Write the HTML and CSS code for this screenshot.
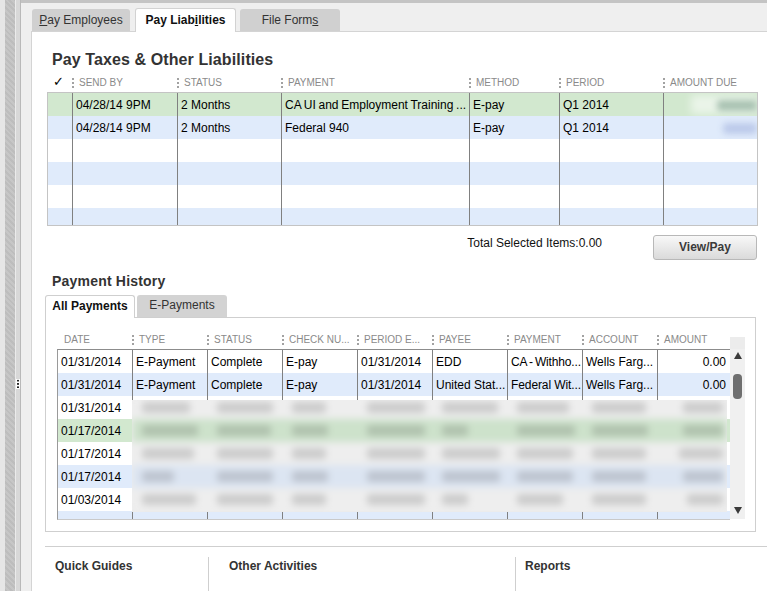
FILE: index.html
```html
<!DOCTYPE html>
<html lang="en">
<head>
<meta charset="utf-8">
<title>Payroll Center</title>
<link rel="stylesheet" href="styles.css">
</head>
<body>
<div class="app">
  <div class="sidebar">
    <div class="sb-a"></div>
    <div class="sb-b"></div>
    <div class="sb-c"></div>
    <div class="sb-d"><span class="grip"></span></div>
  </div>
  <div class="main">
    <div class="topbar"></div>
    <div class="tabs">
      <div class="tab tab1"><u>P</u>ay Employees</div>
      <div class="tab tab2 active">Pay Liab<u>i</u>lities</div>
      <div class="tab tab3">File Form<u>s</u></div>
    </div>
    <div class="content">
      <h1 class="title">Pay Taxes &amp; Other Liabilities</h1>
      <div class="thead">
        <div class="th th-check"><span class="check">✓</span></div>
        <div class="th"><span class="sep"></span>Send By</div>
        <div class="th"><span class="sep"></span>Status</div>
        <div class="th"><span class="sep"></span>Payment</div>
        <div class="th"><span class="sep"></span>Method</div>
        <div class="th"><span class="sep"></span>Period</div>
        <div class="th"><span class="sep"></span>Amount Due</div>
      </div>
      <div class="tbody">
        <div class="trow green">
          <div></div><div>04/28/14 9PM</div><div>2 Months</div><div class="snug">CA UI and Employment Training ...</div><div>E-pay</div><div>Q1 2014</div><div class="amt"><span class="halo"></span><span class="smudge smudge-g"></span></div>
        </div>
        <div class="trow blue">
          <div></div><div>04/28/14 9PM</div><div>2 Months</div><div>Federal 940</div><div>E-pay</div><div>Q1 2014</div><div class="amt"><span class="smudge smudge-b"></span></div>
        </div>
        <div class="trow"><div></div><div></div><div></div><div></div><div></div><div></div><div></div></div>
        <div class="trow blue"><div></div><div></div><div></div><div></div><div></div><div></div><div></div></div>
        <div class="trow"><div></div><div></div><div></div><div></div><div></div><div></div><div></div></div>
        <div class="trow blue"><div></div><div></div><div></div><div></div><div></div><div></div><div></div></div>
      </div>
      <div class="totals">
        <span class="total-text">Total Selected Items:0.00</span>
        <button class="btn" type="button">View/Pay</button>
      </div>

      <section class="history">
        <h2 class="subtitle">Payment History</h2>
        <div class="htabs">
          <div class="htab active">All Payments</div>
          <div class="htab">E-Payments</div>
        </div>
        <div class="hpanel">
          <div class="hgrid">
            <div class="htable">
              <div class="hhead">
                <div class="hh hh-first">Date</div>
                <div class="hh"><span class="sep"></span>Type</div>
                <div class="hh"><span class="sep"></span>Status</div>
                <div class="hh"><span class="sep"></span>Check Nu...</div>
                <div class="hh"><span class="sep"></span>Period E...</div>
                <div class="hh"><span class="sep"></span>Payee</div>
                <div class="hh"><span class="sep"></span>Payment</div>
                <div class="hh"><span class="sep"></span>Account</div>
                <div class="hh"><span class="sep"></span>Amount</div>
              </div>
              <div class="hbody">
                <div class="hrow">
                  <div>01/31/2014</div><div>E-Payment</div><div>Complete</div><div>E-pay</div><div>01/31/2014</div><div>EDD</div><div class="tight">CA - Withho...</div><div>Wells Farg...</div><div class="num">0.00</div>
                </div>
                <div class="hrow blue">
                  <div>01/31/2014</div><div>E-Payment</div><div>Complete</div><div>E-pay</div><div>01/31/2014</div><div>United Stat...</div><div class="slim">Federal Wit...</div><div>Wells Farg...</div><div class="num">0.00</div>
                </div>
                <div class="hrow"><div>01/31/2014</div><div></div><div></div><div></div><div></div><div></div><div></div><div></div><div></div></div>
                <div class="hrow green"><div>01/17/2014</div><div></div><div></div><div></div><div></div><div></div><div></div><div></div><div></div></div>
                <div class="hrow"><div>01/17/2014</div><div></div><div></div><div></div><div></div><div></div><div></div><div></div><div></div></div>
                <div class="hrow blue"><div>01/17/2014</div><div></div><div></div><div></div><div></div><div></div><div></div><div></div><div></div></div>
                <div class="hrow"><div>01/03/2014</div><div></div><div></div><div></div><div></div><div></div><div></div><div></div><div></div></div>
                <div class="hrow blue"><div></div><div></div><div></div><div></div><div></div><div></div><div></div><div></div><div></div></div>

                <div class="blurbox">
                  <div class="blur">
                    <div class="brow b-gray"><i style="width:48px"></i><i style="width:56px"></i><i style="width:34px"></i><i style="width:58px"></i><i style="width:56px"></i><i style="width:52px"></i><i style="width:54px"></i><i class="r" style="width:40px"></i></div>
                    <div class="brow b-green"><i style="width:56px"></i><i style="width:54px"></i><i style="width:36px"></i><i style="width:58px"></i><i style="width:26px"></i><i style="width:58px"></i><i style="width:56px"></i><i class="r" style="width:40px"></i></div>
                    <div class="brow b-gray"><i style="width:52px"></i><i style="width:56px"></i><i style="width:34px"></i><i style="width:58px"></i><i style="width:58px"></i><i style="width:56px"></i><i style="width:54px"></i><i class="r" style="width:44px"></i></div>
                    <div class="brow b-blue"><i style="width:32px"></i><i style="width:56px"></i><i style="width:36px"></i><i style="width:58px"></i><i style="width:58px"></i><i style="width:56px"></i><i style="width:54px"></i><i class="r" style="width:40px"></i></div>
                    <div class="brow b-gray"><i style="width:54px"></i><i style="width:56px"></i><i style="width:34px"></i><i style="width:58px"></i><i style="width:26px"></i><i style="width:46px"></i><i style="width:54px"></i><i class="r" style="width:36px"></i></div>
                  </div>
                </div>
              </div>
            </div>
            <div class="hscroll">
              <div class="scap"></div>
              <div class="strack">
                <span class="arrow-up"></span>
                <span class="thumb"></span>
                <span class="arrow-down"></span>
              </div>
            </div>
          </div>
        </div>
      </section>

      <footer class="footer">
        <div class="fcol f1">Quick Guides</div>
        <div class="fcol f2">Other Activities</div>
        <div class="fcol f3">Reports</div>
      </footer>
    </div>
  </div>
</div>
</body>
</html>
```

FILE: styles.css
```css
* { box-sizing: border-box; margin: 0; padding: 0; }
html, body { width: 767px; height: 591px; overflow: hidden; }
body {
  font-family: "Liberation Sans", Arial, sans-serif;
  font-size: 12px;
  color: #000;
  background: #fff;
}
.app { display: flex; height: 591px; }

/* left dock strip */
.sidebar {
  flex: none;
  width: 21px;
  display: grid;
  grid-template-columns: 5px 10px 1px 4px;
  border-right: 1px solid #b9b9b9;
}
.sb-a { background: #e6e6e6; }
.sb-b { background: repeating-linear-gradient(45deg, #bdbdbd 0 2px, #c6c6c6 2px 4px); }
.sb-c { background: #ebebeb; }
.sb-d { background: #d8d8d8; display: flex; flex-direction: column; }
.grip {
  margin-top: 379px;
  width: 4px;
  height: 10px;
  background-color: #fff;
  background-image: radial-gradient(circle, #222 0.9px, transparent 1.2px);
  background-size: 4px 3.3px;
}

/* main area */
.main {
  flex: 1;
  min-width: 0;
  display: flex;
  flex-direction: column;
  background: #efefef;
}
.topbar { flex: none; height: 3px; background: #c4c4c4; }
.tabs {
  flex: none;
  height: 28px;
  display: flex;
  align-items: flex-end;
  padding-left: 11px;
  position: relative;
  z-index: 1;
}
.tab {
  height: 22px;
  line-height: 22px;
  text-align: center;
  background: #d0d0d0;
  border-radius: 3px 3px 0 0;
  color: #333;
}
.tab u { text-underline-offset: 1px; }
.tab1 { width: 98px; margin-right: 5px; }
.tab2 { width: 101px; margin-right: 4px; }
.tab3 { width: 100px; }
.tab.active {
  height: 24px;
  line-height: 23px;
  margin-bottom: -1px;
  background: #fff;
  border: 1px solid #d2d2d2;
  border-bottom: 0;
  font-weight: bold;
  color: #111;
}

.content {
  flex: 1;
  margin-left: 10px;
  background: #fff;
  border-left: 1px solid #d4d4d4;
  border-top: 1px solid #d4d4d4;
  padding: 0 9px 0 15px;
  display: flex;
  flex-direction: column;
}
.title {
  margin: 18px 0 0 5px;
  font-size: 16px;
  line-height: 20px;
  font-weight: bold;
  color: #333;
  letter-spacing: 0.1px;
}

/* top liabilities table */
.thead {
  display: grid;
  grid-template-columns: 25px 105px 104px 188px 90px 104px 1fr;
  height: 22px;
  padding-top: 7px;
  font-size: 10px;
  color: #8a8a8a;
  text-transform: uppercase;
}
.th {
  display: flex;
  align-items: center;
  gap: 5px;
  height: 12px;
  line-height: 12px;
  white-space: nowrap;
}
.th-check { padding-left: 6px; }
.check {
  font-family: "DejaVu Sans", sans-serif;
  font-size: 13px;
  font-weight: bold;
  color: #000;
  margin-top: -2px;
}
.sep {
  flex: none;
  width: 0;
  height: 10px;
  border-left: 2px dotted #a2a2a2;
}
.tbody {
  height: 134px;
  border: 1px solid #c4c4c4;
  overflow: hidden;
}
.trow {
  display: grid;
  grid-template-columns: 24px 105px 104px 188px 90px 104px 1fr;
  height: 23px;
  line-height: 22px;
  background: #fff;
}
.trow > div {
  border-left: 1px solid #808080;
  padding: 1px 0 0 3px;
  white-space: nowrap;
  overflow: hidden;
}
.trow > div:first-child { border-left: 0; }
.snug { word-spacing: -0.6px; }
.tight { letter-spacing: -0.15px; word-spacing: -1px; }
.slim { letter-spacing: -0.1px; }
.green { background: #d2e8cf; }
.blue { background: #e0ebfb; }
.amt {
  position: relative;
  display: flex;
  justify-content: flex-end;
  align-items: center;
  padding-right: 4px;
}
.halo {
  position: absolute;
  right: 0;
  top: 2px;
  width: 66px;
  height: 19px;
  background: rgba(255, 255, 255, 0.55);
  filter: blur(4px);
}
.smudge {
  position: relative;
  display: block;
  height: 11px;
  filter: blur(3px);
  border-radius: 4px;
}
.smudge-g { width: 40px; background: #a9c2b2; }
.smudge-b { width: 34px; background: #bccaea; }

.totals {
  display: flex;
  justify-content: flex-end;
  align-items: flex-start;
  gap: 51px;
  margin: 9px 1px 0 0;
}
.total-text { line-height: 14px; color: #111; margin-top: 1px; }
.btn {
  width: 104px;
  height: 25px;
  border: 1px solid #b8b8b8;
  border-radius: 3px;
  background: linear-gradient(#f8f8f8, #dadada);
  font-family: "Liberation Sans", Arial, sans-serif;
  font-size: 12px;
  font-weight: bold;
  color: #3a3a3a;
  line-height: 23px;
  text-align: center;
}

/* payment history */
.history { margin: 0 2px 0 -2px; }
.subtitle {
  margin: 13px 0 0 7px;
  font-size: 14px;
  line-height: 17px;
  font-weight: bold;
  color: #333;
  letter-spacing: 0.2px;
}
.htabs {
  display: flex;
  align-items: flex-end;
  gap: 2px;
  margin-top: 5px;
  position: relative;
  z-index: 1;
}
.htab {
  width: 90px;
  height: 22px;
  line-height: 21px;
  text-align: center;
  background: #d3d3d3;
  border-radius: 3px 3px 0 0;
  color: #333;
}
.htab.active {
  height: 23px;
  line-height: 20px;
  margin-bottom: -1px;
  background: #fff;
  border: 1px solid #cfcfcf;
  border-bottom: 0;
  font-weight: bold;
  color: #111;
}
.hpanel {
  height: 215px;
  border: 1px solid #cfcfcf;
  padding: 15px 10px 0 11px;
}
.hgrid { display: flex; }
.htable { flex: 1; min-width: 0; }
.hhead {
  display: grid;
  grid-template-columns: repeat(8, 75px) 1fr;
  height: 16px;
  padding-top: 1px;
  font-size: 10px;
  color: #8a8a8a;
  text-transform: uppercase;
}
.hh {
  display: flex;
  align-items: center;
  gap: 5px;
  height: 12px;
  line-height: 12px;
  white-space: nowrap;
  overflow: hidden;
}
.hh-first { padding-left: 7px; }
.hbody {
  position: relative;
  height: 171px;
  border-top: 1px solid #8c8c8c;
  border-left: 1px solid #9a9a9a;
  border-bottom: 1px solid #c9c9c9;
  overflow: hidden;
}
.hrow {
  display: grid;
  grid-template-columns: 74px repeat(7, 75px) 1fr;
  height: 23px;
  line-height: 22px;
  background: #fff;
}
.hrow.blue { background: #e0ebfb; }
.hrow.green { background: #d2e8cf; }
.hrow > div {
  border-left: 1px solid #808080;
  padding: 1px 0 0 3px;
  white-space: nowrap;
  overflow: hidden;
}
.hrow > div:first-child { border-left: 0; }
.hrow > .num { text-align: right; padding-right: 4px; }

.blurbox {
  position: absolute;
  left: 74px;
  top: 50px;
  width: 595px;
  height: 112px;
  overflow: hidden;
  background: #ececec;
}
.blur {
  margin-top: -4px;
  filter: blur(3.5px);
}
.brow {
  display: grid;
  grid-template-columns: repeat(7, 75px) 1fr;
  height: 23px;
  align-items: center;
}
.brow i {
  display: block;
  height: 11px;
  margin-left: 10px;
  background: rgba(0, 0, 0, 0.14);
  border-radius: 3px;
}
.brow i.r { margin-left: auto; margin-right: 4px; }
.b-gray { background: #eeeeee; }
.b-green { background: #cde2cb; }
.b-blue { background: #dce5f2; }

.hscroll {
  flex: none;
  width: 15px;
  display: flex;
  flex-direction: column;
  padding-top: 4px;
}
.scap { height: 12px; background: #ececec; }
.strack {
  height: 170px;
  background: #f0f0f0;
  display: flex;
  flex-direction: column;
  align-items: center;
}
.arrow-up {
  margin-top: 3px;
  width: 0;
  height: 0;
  border-left: 4.5px solid transparent;
  border-right: 4.5px solid transparent;
  border-bottom: 7px solid #3a3a3a;
}
.thumb {
  margin-top: 15px;
  width: 9px;
  height: 25px;
  border-radius: 4px;
  background: #6f6f6f;
}
.arrow-down {
  margin-top: auto;
  margin-bottom: 5px;
  width: 0;
  height: 0;
  border-left: 4.5px solid transparent;
  border-right: 4.5px solid transparent;
  border-top: 7px solid #3a3a3a;
}

/* footer */
.footer {
  flex: 1;
  display: flex;
  margin: 14px -9px 0 -2px;
  border-top: 1px solid #cfcfcf;
}
.fcol {
  margin-top: 10px;
  padding-top: 2px;
  font-weight: bold;
  line-height: 14px;
  color: #333;
}
.f1 { width: 163px; padding-left: 10px; }
.f2 { width: 307px; padding-left: 20px; border-left: 1px solid #cfcfcf; }
.f3 { flex: 1; padding-left: 9px; border-left: 1px solid #cfcfcf; }
```
